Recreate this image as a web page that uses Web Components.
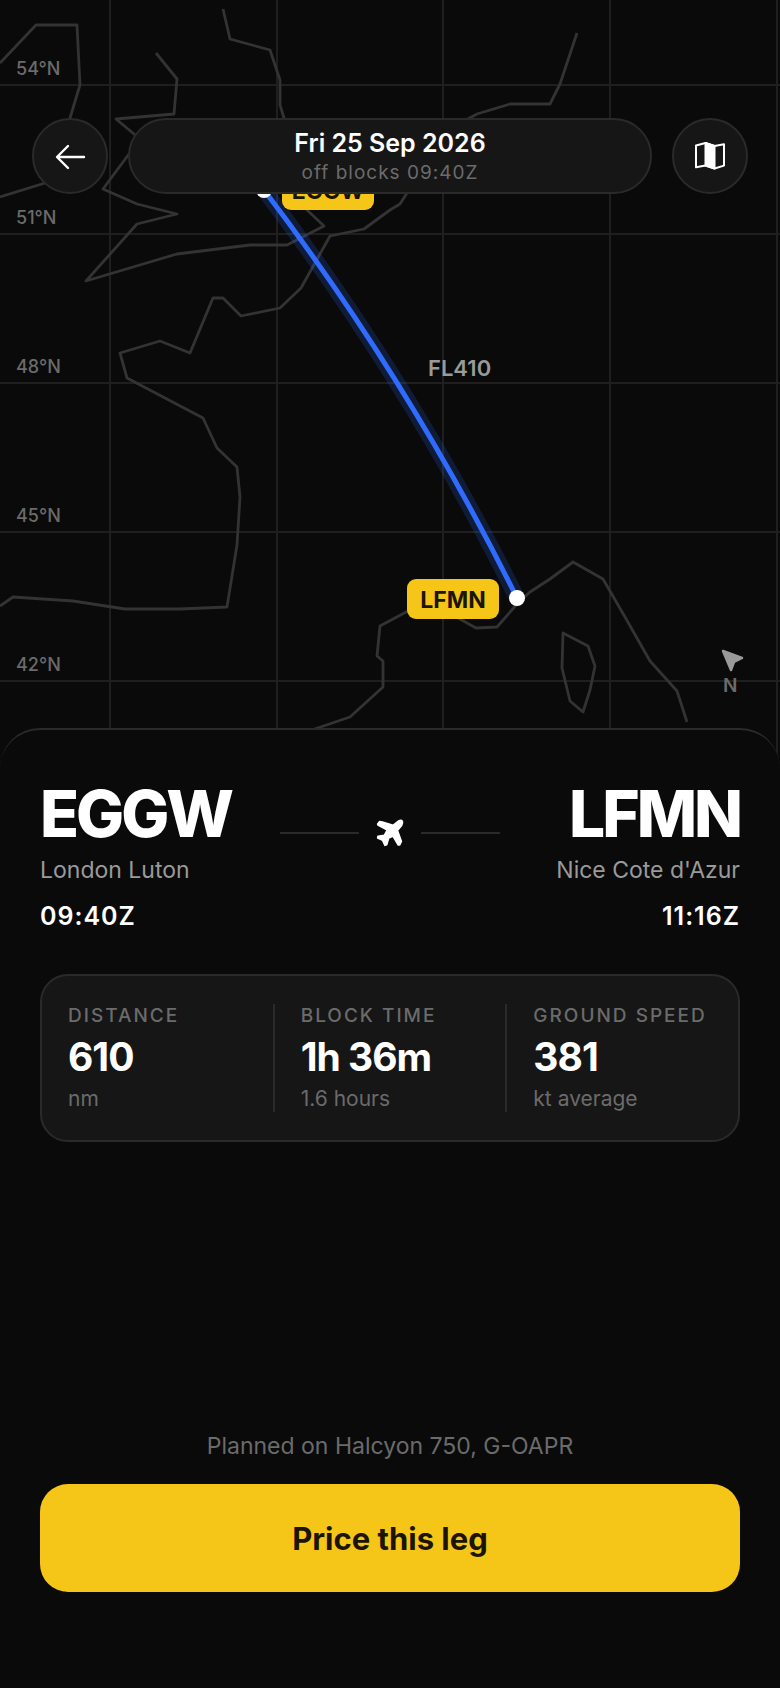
<!DOCTYPE html>
<html lang="en">
<head>
<meta charset="utf-8">
<meta name="viewport" content="width=device-width, initial-scale=1">
<title>Flight leg</title>
<style>
  :root {
    --bg: #0a0a0a;
    --card: #161616;
    --line: #2a2a2a;
    --muted: #6b6b6b;
    --soft: #9a9a9a;
    --accent: #f5c518;
    --ink: #1a1400;
  }
  body {
    margin: 0;
    background: var(--bg);
    color: #fff;
    font-family: Inter, "Liberation Sans", sans-serif;
  }
</style>
</head>
<body>

<template id="leg-screen">
  <style>
    :host {
      display: flex;
      flex-direction: column;
      min-height: 100vh;
    }
    .top {
      display: grid;
    }
    /* map and bar share one cell, the bar floats over the map */
    .top > * {
      grid-area: 1 / 1;
    }
    .bar {
      align-self: start;
      display: flex;
      gap: 20px;
      padding: 118px 32px 0;
      z-index: 1;
    }
    .date {
      flex: 1;
    }
    leg-sheet {
      flex: 1;
      margin-top: -40px;
      z-index: 1;
    }
  </style>
  <div class="top">
    <route-map></route-map>
    <header class="bar">
      <icon-button label="Back">
        <svg width="34" height="34" viewBox="0 0 34 34" fill="none" stroke="#fff" stroke-width="2.4" stroke-linecap="round" stroke-linejoin="round">
          <path d="M15 7 4 18l11 11M4.500 18H31"/>
        </svg>
      </icon-button>
      <date-pill class="date">
        <span slot="date">Fri 25 Sep 2026</span>
        <span slot="note">off blocks 09:40Z</span>
      </date-pill>
      <icon-button label="Map style">
        <svg width="34" height="34" viewBox="0 0 34 34" fill="none" stroke="#fff" stroke-width="2" stroke-linejoin="round">
          <path d="M3 6.500 12.500 4 21.500 7 31 5.200V26.600L21.500 29.500 12.500 26.500 3 28.200Z"/>
          <path d="M12.500 4 21.500 7V29.500L12.500 26.500Z" fill="#fff"/>
        </svg>
      </icon-button>
    </header>
  </div>
  <leg-sheet></leg-sheet>
</template>

<template id="icon-button">
  <style>
    :host {
      display: block;
    }
    button {
      display: flex;
      align-items: center;
      justify-content: center;
      width: 76px;
      height: 76px;
      margin: 0;
      padding: 0;
      border: 2px solid var(--line);
      border-radius: 50%;
      background: var(--card);
      cursor: pointer;
    }
  </style>
  <button type="button"><slot></slot></button>
</template>

<template id="date-pill">
  <style>
    :host {
      display: flex;
      flex-direction: column;
      align-items: center;
      justify-content: center;
      box-sizing: border-box;
      height: 76px;
      padding-top: 4px;
      border: 2px solid var(--line);
      border-radius: 38px;
      background: var(--card);
    }
    .date {
      font-size: 25px;
      line-height: 30px;
      font-weight: 600;
    }
    .note {
      font-size: 19px;
      line-height: 30px;
      letter-spacing: 1px;
      color: var(--muted);
    }
  </style>
  <div class="date"><slot name="date"></slot></div>
  <div class="note"><slot name="note"></slot></div>
</template>

<template id="route-map">
  <style>
    :host {
      display: block;
    }
    svg {
      display: block;
      width: 100%;
      height: auto;
    }
    .grid {
      stroke: #1f1f1f;
      stroke-width: 2;
    }
    .coast {
      fill: none;
      stroke: #333;
      stroke-width: 2.800;
      stroke-linejoin: round;
    }
    .route {
      fill: none;
      stroke: #2f6bff;
      stroke-width: 5;
    }
    .glow {
      stroke-width: 16;
      opacity: .18;
    }
    .lat, .north {
      font-size: 18px;
      font-weight: 500;
      fill: var(--muted);
    }
    .north {
      font-size: 19px;
      font-weight: 600;
    }
    .level {
      font-size: 22px;
      font-weight: 600;
      fill: var(--soft);
    }
    .tag rect {
      fill: var(--accent);
    }
    .tag text {
      font-size: 23px;
      font-weight: 700;
      text-anchor: middle;
      fill: var(--ink);
    }
  </style>
  <svg viewBox="0 0 780 768" role="img" aria-label="Route map">
    <g class="grid">
      <path d="M110 0V768M277 0V768M443 0V768M610 0V768M777 0V768"/>
      <path d="M0 85H780M0 234H780M0 383H780M0 532H780M0 681H780"/>
    </g>
    <g class="coast">
      <path d="M0 63 36 25H77L80 85 70 118 62 150 45 183 0 197"/>
      <path d="M156 53 177 79 174 114 116 119 140 139 129 154 103 189 137 204 177 214 137 224 86 281 177 254 250 245H287L324 226 307 210 290 190 296 150 284 118 280 105V80L270 50 230 39 223 9"/>
      <path d="M577 33 560 84 550 104H510L477 114 455 126 407 193 400 204 390 210 364 229 330 236 301 288 280 308 241 316 223 298H213L190 353 160 341 120 353 127 378 203 418 217 448 237 467 240 497 237 545 227 607 180 609H125L73 601 13 597 0 606"/>
      <path d="M300 734 350 717 383 687V661L377 656 380 626 408 611 440 604 458 618 476 628 497 627 517 604 530 592 550 579 573 562 603 579 625 617 650 661 677 691 687 722"/>
      <path d="M563 633 588 646 595 666 590 690 583 712 570 701 562 668Z"/>
    </g>
    <path class="route glow" d="M264 190Q410 382 517 598"/>
    <path class="route" d="M264 190Q410 382 517 598"/>
    <circle cx="264" cy="190" r="8" fill="#fff"/>
    <circle cx="517" cy="598" r="8" fill="#fff"/>
    <text class="lat" x="16" y="75">54°N</text>
    <text class="lat" x="16" y="224">51°N</text>
    <text class="lat" x="16" y="373">48°N</text>
    <text class="lat" x="16" y="522">45°N</text>
    <text class="lat" x="16" y="671">42°N</text>
    <text class="level" x="428" y="376">FL410</text>
    <g class="tag">
      <rect x="282" y="170" width="92" height="40" rx="9"/>
      <text x="328" y="199">EGGW</text>
      <rect x="407" y="579" width="92" height="40" rx="9"/>
      <text x="453" y="608">LFMN</text>
    </g>
    <path d="M723 651 742 658 734 662 731 670Z" fill="#9a9a9a" stroke="#9a9a9a" stroke-width="2.500" stroke-linejoin="round"/>
    <text class="north" x="723" y="692">N</text>
  </svg>
</template>

<template id="leg-sheet">
  <style>
    :host {
      display: flex;
      flex-direction: column;
      box-sizing: border-box;
      padding: 44px 40px 96px;
      border-top: 2px solid var(--line);
      border-radius: 40px 40px 0 0;
      background: var(--bg);
    }
    .leg {
      display: grid;
      grid-template-columns: 1fr minmax(0, 220px) 1fr;
    }
    .track {
      display: flex;
      align-items: center;
      gap: 14px;
      height: 34px;
      margin-top: 42px;
    }
    .track i {
      flex: 1;
      height: 2px;
      background: var(--line);
    }
    .stats {
      display: flex;
      margin-top: 42px;
      padding: 28px 0;
      border: 2px solid var(--line);
      border-radius: 28px;
      background: var(--card);
    }
    .stats stat-cell + stat-cell {
      border-left: 2px solid var(--line);
    }
    .plan {
      margin: auto 0 22px;
      font-size: 23px;
      line-height: 32px;
      text-align: center;
      color: var(--muted);
    }
    .price {
      height: 108px;
      margin: 0;
      padding: 0;
      border: 0;
      border-radius: 28px;
      background: var(--accent);
      color: var(--ink);
      font: inherit;
      font-size: 31px;
      font-weight: 700;
      cursor: pointer;
    }
  </style>
  <section class="leg">
    <airport-end code="EGGW" place="London Luton" time="09:40Z"></airport-end>
    <div class="track">
      <i></i>
      <svg width="34" height="34" viewBox="41 49 102 102" fill="#fff" stroke="#fff" stroke-width="5" stroke-linejoin="round">
        <path d="M118 64Q126 60 129 65 131 71 127 77L114 92 126 125 121 136H117L101 109 88 115 82 135 77 137 70 122 55 115 56 110 75 107 84 91 56 76 55 73 61 66 69 67 101 77Z"/>
      </svg>
      <i></i>
    </div>
    <airport-end align="right" code="LFMN" place="Nice Cote d'Azur" time="11:16Z"></airport-end>
  </section>
  <section class="stats">
    <stat-cell label="DISTANCE" value="610" unit="nm"></stat-cell>
    <stat-cell label="BLOCK TIME" value="1h 36m" unit="1.6 hours"></stat-cell>
    <stat-cell label="GROUND SPEED" value="381" unit="kt average"></stat-cell>
  </section>
  <p class="plan">Planned on Halcyon 750, G-OAPR</p>
  <button class="price" type="button">Price this leg</button>
</template>

<template id="airport-end">
  <style>
    :host {
      display: flex;
      flex-direction: column;
      align-items: flex-start;
      white-space: nowrap;
    }
    :host([align="right"]) {
      align-items: flex-end;
    }
    .code {
      font-size: 64px;
      line-height: 80px;
      font-weight: 800;
      letter-spacing: -3px;
    }
    .place {
      font-size: 23px;
      line-height: 32px;
      color: var(--soft);
    }
    .time {
      margin-top: 14px;
      font-size: 25px;
      line-height: 32px;
      font-weight: 600;
      letter-spacing: 1px;
    }
  </style>
  <div class="code" id="code"></div>
  <div class="place" id="place"></div>
  <div class="time" id="time"></div>
</template>

<template id="stat-cell">
  <style>
    :host {
      display: flex;
      flex: 1;
      flex-direction: column;
      gap: 4px;
      min-width: 0;
      padding: 0 26px;
      white-space: nowrap;
    }
    .label {
      font-size: 19px;
      line-height: 24px;
      font-weight: 500;
      letter-spacing: 2px;
      color: var(--muted);
    }
    .value {
      font-size: 39px;
      line-height: 50px;
      font-weight: 700;
      letter-spacing: -1px;
    }
    .unit {
      font-size: 21px;
      line-height: 26px;
      color: var(--muted);
    }
  </style>
  <div class="label" id="label"></div>
  <div class="value" id="value"></div>
  <div class="unit" id="unit"></div>
</template>

<script>
  (function () {
    // base: clone the template named after the tag, fill ids from attributes
    class Base extends HTMLElement {
      constructor() {
        super()
        const template = document.getElementById(this.localName)
        this.attachShadow({ mode: 'open' }).appendChild(template.content.cloneNode(true))
      }
      connectedCallback() {
        this.shadowRoot.querySelectorAll('[id]').forEach(item => {
          item.textContent = this.getAttribute(item.id)
        })
      }
    }

    class IconButton extends Base {
      connectedCallback() {
        this.shadowRoot.querySelector('button').setAttribute('aria-label', this.getAttribute('label'))
      }
    }

    customElements.define('icon-button', IconButton)
    customElements.define('date-pill', class extends Base {})
    customElements.define('route-map', class extends Base {})
    customElements.define('airport-end', class extends Base {})
    customElements.define('stat-cell', class extends Base {})
    customElements.define('leg-sheet', class extends Base {})
    customElements.define('leg-screen', class extends Base {})
  })()
</script>

<leg-screen></leg-screen>
</body>
</html>
